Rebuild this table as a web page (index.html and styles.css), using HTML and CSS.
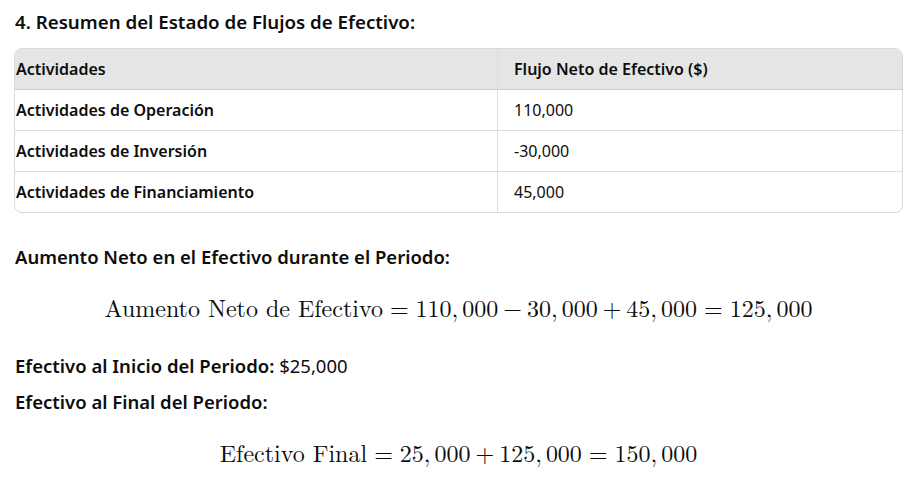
FILE: index.html
```html
<!DOCTYPE html>
<html lang="es">
<head>
<meta charset="utf-8">
<link rel="stylesheet" href="styles.css">
</head>
<body>
<div class="content">
  <h3 class="title">4. Resumen del Estado de Flujos de Efectivo:</h3>
  <div class="table-wrap">
    <table class="tbl">
      <thead>
        <tr><th class="c1">Actividades</th><th class="c2">Flujo Neto de Efectivo ($)</th></tr>
      </thead>
      <tbody>
        <tr><td class="c1 strong">Actividades de Operación</td><td class="c2">110,000</td></tr>
        <tr><td class="c1 strong">Actividades de Inversión</td><td class="c2">-30,000</td></tr>
        <tr><td class="c1 strong">Actividades de Financiamiento</td><td class="c2">45,000</td></tr>
      </tbody>
    </table>
  </div>
  <p class="para first"><strong>Aumento Neto en el Efectivo durante el Periodo:</strong></p>
  <div class="math">Aumento Neto de Efectivo<span class="rel">=</span>110,<span class="th"></span>000<span class="bin">−</span>30,<span class="th"></span>000<span class="bin">+</span>45,<span class="th"></span>000<span class="rel">=</span>125,<span class="th"></span>000</div>
  <p class="para"><strong>Efectivo al Inicio del Periodo:</strong> $25,000</p>
  <p class="para"><strong>Efectivo al Final del Periodo:</strong></p>
  <div class="math">Efectivo Final<span class="rel">=</span>25,<span class="th"></span>000<span class="bin">+</span>125,<span class="th"></span>000<span class="rel">=</span>150,<span class="th"></span>000</div>
</div>
</body>
</html>
```
FILE: styles.css
```css
html, body {
  margin: 0;
  padding: 0;
  background: #ffffff;
}
body {
  font-family: "Noto Sans", "Open Sans", sans-serif;
  color: #0d0d0d;
  font-size: 16px;
}
.content {
  width: 889px;
  padding: 0 0 0 14px;
}
.title {
  margin: 0;
  padding-top: 8px;
  font-size: 18.7px;
  font-weight: 600;
  line-height: 28px;
  padding-left: 1px;
}
.table-wrap {
  margin-top: 12px;
  border: 1px solid #d9d9d9;
  border-radius: 8px;
  overflow: hidden;
}
.tbl {
  width: 100%;
  border-collapse: collapse;
}
.tbl th, .tbl td {
  height: 40px;
  padding: 0;
  text-align: left;
  font-size: 16px;
  line-height: 24px;
}
.tbl th {
  background: #e5e5e5;
  font-weight: 600;
  border-bottom: 1px solid #cfcfcf;
}
.tbl td {
  border-top: 1px solid #dcdcdc;
  font-weight: 400;
}
.tbl tbody tr:first-child td { border-top: none; }
.tbl .c1 {
  width: 481px;
  padding-left: 1px;
  border-right: 1px solid #dcdcdc;
}
.tbl .c2 {
  padding-left: 16px;
}
.tbl td.strong { font-weight: 600; }
.para {
  margin: 0;
  padding-left: 1px;
  font-size: 18.5px;
  line-height: 36px;
}
.para strong { font-weight: 600; }
.para.first { margin-top: 26px; }
.math {
  font-family: "Latin Modern Roman", "Liberation Serif", serif;
  font-size: 24px;
  text-align: center;
  line-height: 30px;
  margin: 17px 0 26px;
  white-space: nowrap;
}
.rel { margin: 0 7px; }
.bin { margin: 0 5px; }
.th { display: inline-block; width: 4px; }
```
